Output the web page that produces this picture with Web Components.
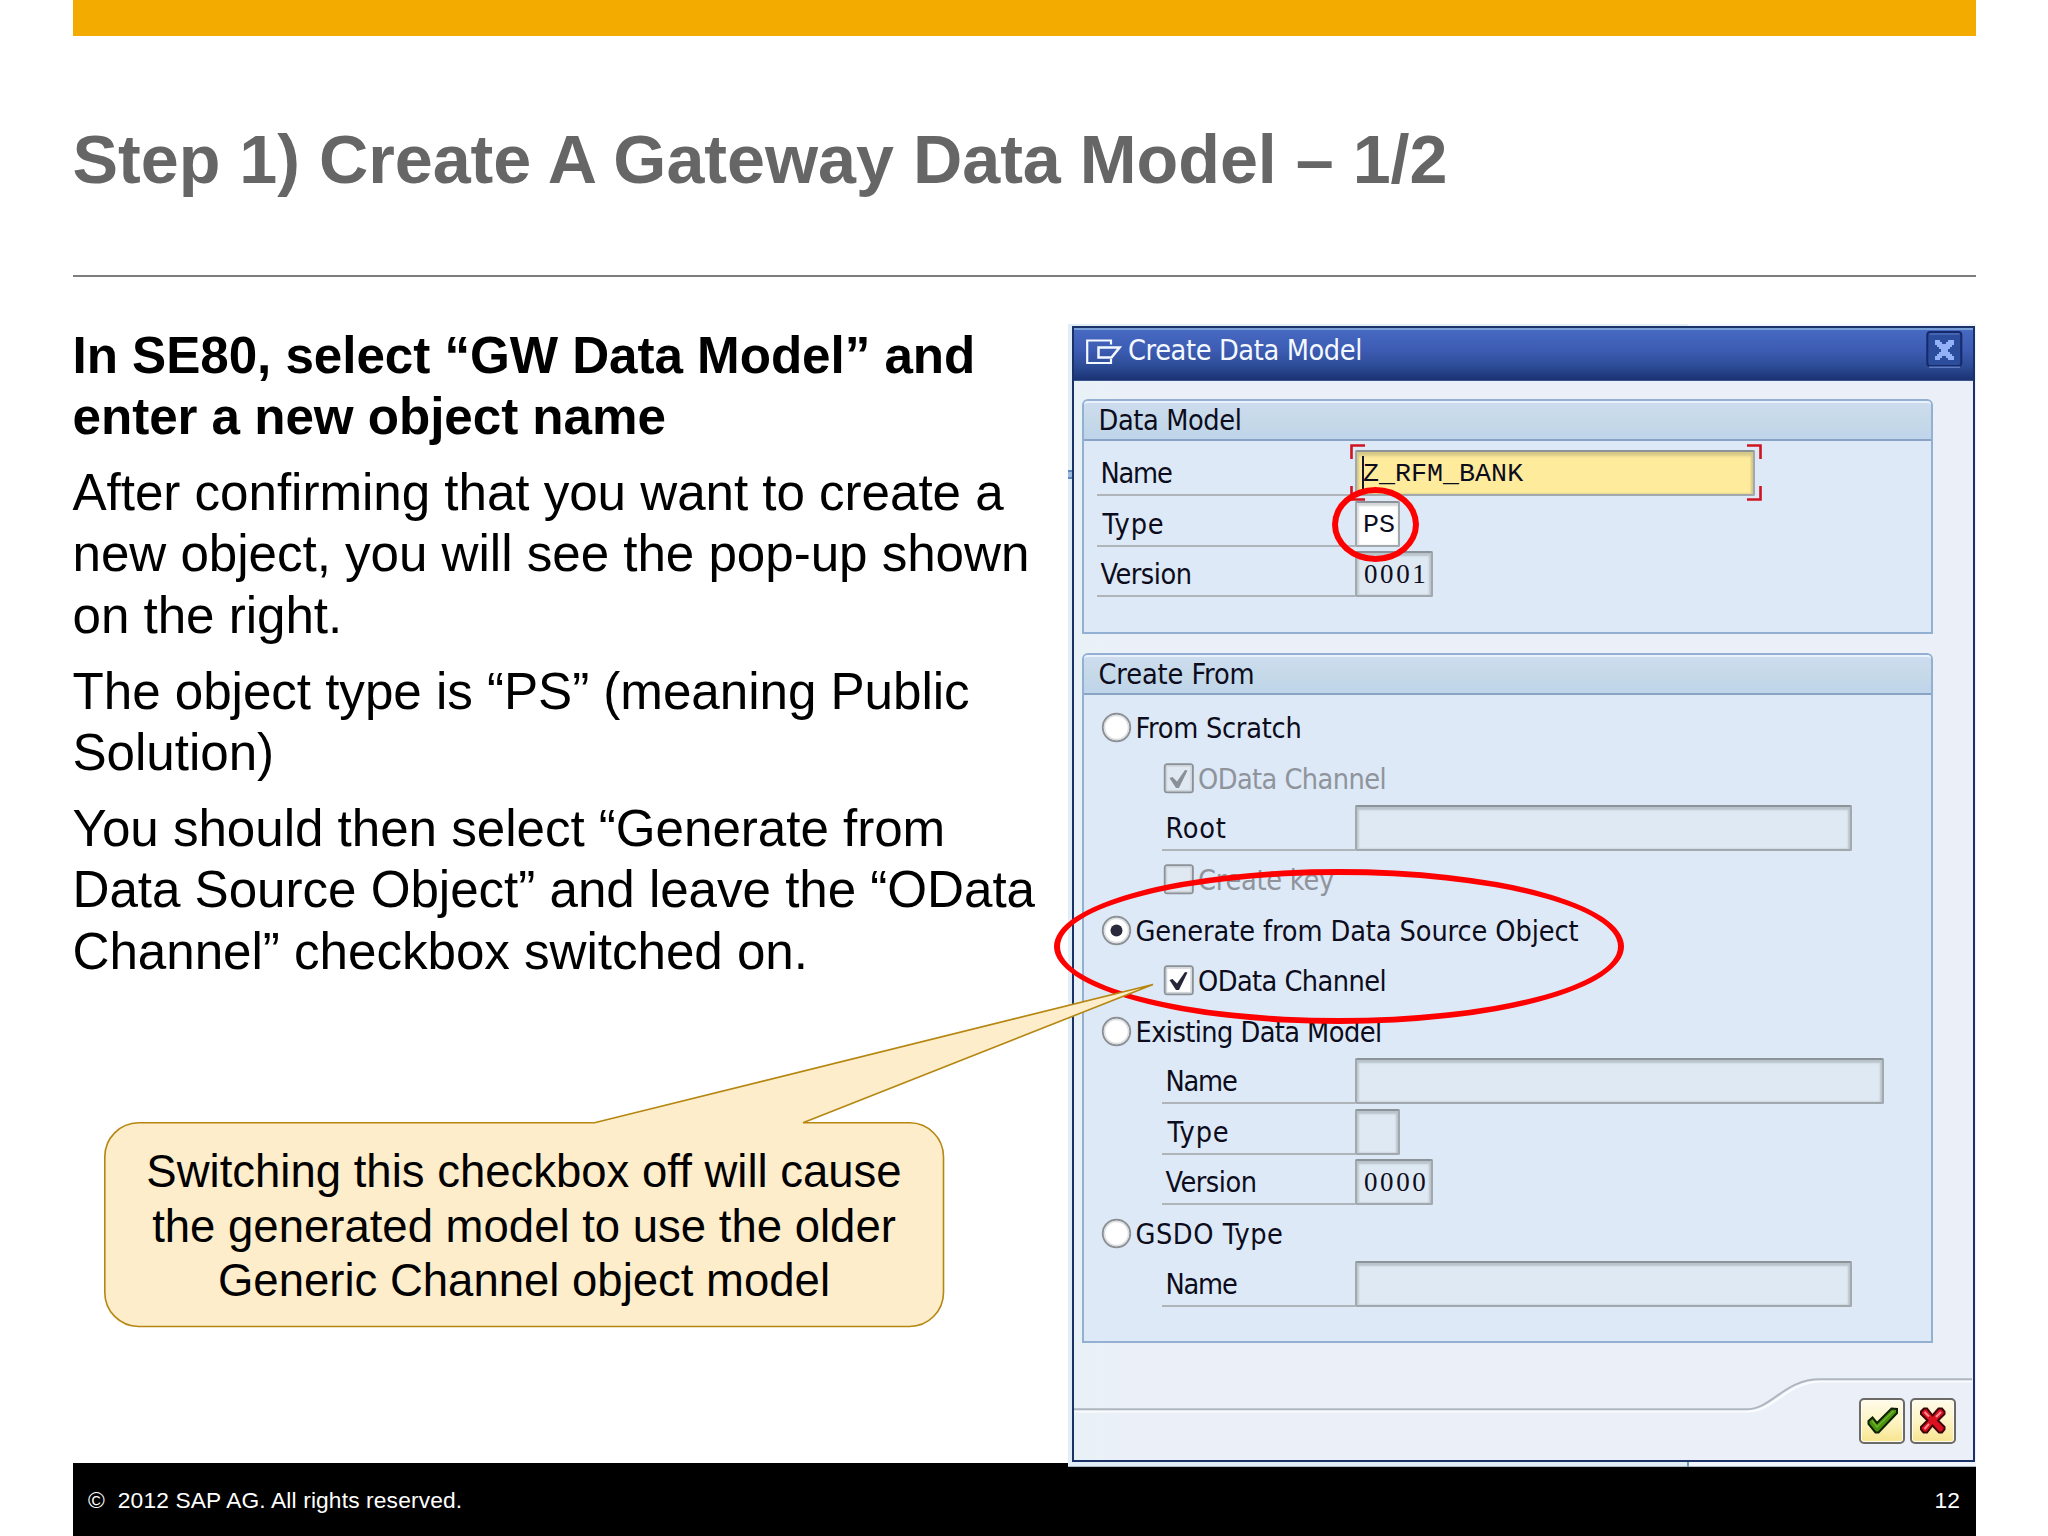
<!DOCTYPE html>
<html lang="en">
<head>
<meta charset="utf-8">
<title>Step 1) Create A Gateway Data Model</title>
<style>
  html, body {
    margin: 0;
    background: #fff;
  }

  body {
    width: 2048px;
    height: 1536px;
    overflow: hidden;
    font-family: "Liberation Sans", Arial, sans-serif;
  }
</style>
</head>
<body>

<training-slide>
  <fit-text slot="title" width="1375">Step 1) Create A Gateway Data Model – 1/2</fit-text>

  <slide-text slot="text">
    <p><b>In SE80, select “GW Data Model” and<br>enter a new object name</b></p>
    <p>After confirming that you want to create a<br>new object, you will see the pop-up shown<br>on the right.</p>
    <p>The object type is “PS” (meaning Public<br>Solution)</p>
    <p>You should then select “Generate from<br>Data Source Object” and leave the “OData<br>Channel” checkbox switched on.</p>
  </slide-text>

  <sap-dialog slot="figure">
    <fit-text slot="title" width="234">Create Data Model</fit-text>

    <sap-group style="height: 235px">
      <fit-text slot="title" width="143">Data Model</fit-text>
      <sap-field size="400" state="focus" text-width="71" value="Z_RFM_BANK">Name</sap-field>
      <sap-field size="45" state="open" text-width="62" inset="2" value="PS">Type</sap-field>
      <sap-field size="78" text-width="91" digits value="0001">Version</sap-field>
    </sap-group>

    <sap-group style="height: 690px">
      <fit-text slot="title" width="156">Create From</fit-text>
      <sap-option kind="radio" text-width="166">From Scratch</sap-option>
      <sap-option kind="check" nested checked disabled text-width="188">OData Channel</sap-option>
      <sap-field nested size="497" text-width="61">Root</sap-field>
      <sap-option kind="check" nested disabled text-width="136">Create key</sap-option>
      <sap-option kind="radio" checked text-width="443">Generate from Data Source Object</sap-option>
      <sap-option kind="check" nested checked text-width="188">OData Channel</sap-option>
      <sap-option kind="radio" text-width="246">Existing Data Model</sap-option>
      <sap-field nested size="529" text-width="71">Name</sap-field>
      <sap-field nested size="45" text-width="62" inset="2">Type</sap-field>
      <sap-field nested size="78" text-width="91" digits value="0000">Version</sap-field>
      <sap-option kind="radio" text-width="148">GSDO Type</sap-option>
      <sap-field nested size="497" text-width="71">Name</sap-field>
    </sap-group>
  </sap-dialog>

  <red-ring slot="overlay" style="left: 1332px; top: 487px; width: 87px; height: 75px"></red-ring>
  <red-ring slot="overlay" style="left: 1053.5px; top: 869px; width: 570px; height: 155px"></red-ring>

  <callout-note slot="overlay">Switching this checkbox off will cause<br>the generated model to use the older<br>Generic Channel object model</callout-note>

  <span slot="copyright">©&nbsp; 2012 SAP AG. All rights reserved.</span>
  <span slot="page">12</span>
</training-slide>

<script>
  /**
   * Inline text spread to a given width by adjusting its tracking.
   */
  class FitText extends HTMLElement {
    constructor() {
      super();
      this.attachShadow({ mode: 'open' });
      this.shadowRoot.innerHTML = `
        <style>
          :host {
            display: inline-block;
            white-space: nowrap;
            flex: none;
          }
        </style>
        <slot></slot>
      `;
    }

    connectedCallback() {
      requestAnimationFrame(() => this.fit());
      this.fit();
    }

    fit() {
      const target = Number(this.getAttribute('width'));
      if (!target) return;
      this.style.letterSpacing = '0px';
      const natural = this.getBoundingClientRect().width;
      if (!natural) return;
      this.style.letterSpacing = ((target - natural) / this.textContent.length) + 'px';
    }
  }

  /**
   * Slide frame: top band, title, two columns, footer.
   */
  class TrainingSlide extends HTMLElement {
    constructor() {
      super();
      this.attachShadow({ mode: 'open' });
      this.shadowRoot.innerHTML = `
        <style>
          :host {
            display: flex;
            flex-direction: column;
            position: relative;
            box-sizing: border-box;
            width: 2048px;
            height: 1536px;
            padding: 0 72.5px;
            background: #fff;
          }

          .band {
            height: 36.3px;
            background: #f3ab00;
          }

          header {
            display: flex;
            align-items: center;
            box-sizing: border-box;
            height: 240.7px;
            padding-top: 6px;
            border-bottom: 2px solid #7d7d7d;
            color: #666;
            font-size: 68.27px;
            font-weight: bold;
          }

          main {
            display: grid;
            grid-template-columns: 995px 908px;
            height: 1186.5px;
          }

          .text {
            padding-top: 47.9px;
          }

          .figure {
            padding-top: 47.5px;
          }

          footer {
            display: flex;
            justify-content: space-between;
            align-items: center;
            flex: 1;
            padding: 2px 15.5px 0;
            background: #000;
            color: #fff;
            font-size: 22.75px;
            letter-spacing: 0.14px;
          }
        </style>

        <div class="band"></div>
        <header><slot name="title"></slot></header>
        <main>
          <div class="text"><slot name="text"></slot></div>
          <div class="figure"><slot name="figure"></slot></div>
        </main>
        <footer>
          <slot name="copyright"></slot>
          <slot name="page"></slot>
        </footer>
        <slot name="overlay"></slot>
      `;
    }
  }

  class SlideText extends HTMLElement {
    constructor() {
      super();
      this.attachShadow({ mode: 'open' });
      this.shadowRoot.innerHTML = `
        <style>
          :host {
            display: flex;
            flex-direction: column;
            gap: 14.3px;
            color: #000;
            font-size: 51.2px;
            line-height: 61.44px;
            letter-spacing: -0.05px;
            white-space: nowrap;
          }

          ::slotted(p) {
            margin: 0;
          }
        </style>
        <slot></slot>
      `;
    }
  }

  /**
   * Modal window with title bar and confirm / cancel buttons.
   */
  class SapDialog extends HTMLElement {
    constructor() {
      super();
      this.attachShadow({ mode: 'open' });
      this.shadowRoot.innerHTML = `
        <style>
          :host {
            display: block;
            position: relative;
            z-index: 1;
            box-sizing: border-box;
            width: 908px;
            height: 1143px;
            padding: 1.5px 0.5px 5px 4.5px;
            background:
              linear-gradient(#5f86b8 0 0) 0 146px / 5px 2px no-repeat,
              linear-gradient(#9dbce0 0 0) 0 148px / 5px 5px no-repeat,
              linear-gradient(#5f86b8 0 0) 0 153px / 5px 2px no-repeat,
              linear-gradient(#7c9aae 0 0) 619px 1138px / 2px 5px no-repeat,
              linear-gradient(#aab9c4 0 0) 0 1142px / 100% 1px no-repeat,
              linear-gradient(90deg, #e2eef7 0 620px, #f3f5fd 620px);
            font-family: "DejaVu Sans Condensed", "DejaVu Sans", sans-serif;
            font-stretch: condensed;
            font-size: 28.6px;
            color: #0c0c1c;
          }

          .window {
            display: flex;
            flex-direction: column;
            box-sizing: border-box;
            height: 100%;
            border: 2.5px solid #1b3268;
            background: linear-gradient(90deg, #e8f2f6, #ebf0f8 5%, #ebf0f8);
          }

          .bar {
            display: flex;
            align-items: center;
            box-sizing: border-box;
            height: 53px;
            padding: 0 10px 5px 12px;
            border-top: 2px solid #7ba0d8;
            border-bottom: 1px solid #3c558f;
            background: linear-gradient(#4669c1, #3d5cb3 40%, #2d4c96 72%, #1a3273);
            color: #f4f8ff;
          }

          .bar svg {
            flex: none;
          }

          .close {
            margin-bottom: 6px;
          }

          .label {
            flex: 1;
            padding: 0 0 4px 6px;
          }

          .content {
            display: flex;
            flex-direction: column;
            gap: 18.7px;
            padding: 18px 40px 0 7.5px;
          }

          .actions {
            display: flex;
            flex: 1;
            position: relative;
            justify-content: flex-end;
            align-items: flex-end;
            gap: 4.5px;
            padding: 0 17.5px 16px 0;
          }

          .actions .edge {
            position: absolute;
            left: 0;
            top: 0;
          }

          button {
            display: grid;
            place-items: center;
            position: relative;
            box-sizing: border-box;
            width: 46px;
            height: 46px;
            padding: 0;
            border: 2.5px solid #6c6a66;
            border-radius: 5px;
            background: linear-gradient(#fffbea, #fdf3c0 55%, #f7e48e);
            box-shadow: inset 0 0 0 1px #fffdf2;
          }

          button svg {
            margin-bottom: 3px;
          }
        </style>

        <div class="window">
          <div class="bar">
            <svg width="36" height="28" viewBox="0 0 36 28" fill="none" stroke="#f4f8ff" stroke-width="2.2">
              <path d="M25 6.500V2.500H1.200V25H25V21"/>
              <path d="M12.500 9.500H33.500L25.500 19.500H12.500Z" stroke-width="2.500"/>
            </svg>
            <div class="label"><slot name="title"></slot></div>
            <svg class="close" width="37" height="38" viewBox="0 0 37 38">
              <rect x="1.300" y="2" width="34" height="34" rx="3" fill="#2c4d9c" stroke="#15296b" stroke-width="2"/>
              <path d="M3 37.200H34" stroke="#5f7fc6" stroke-width="1.500"/>
              <path d="M3.500 4H33.500" stroke="#4d6dbd" stroke-width="1.500"/>
              <path d="M9 10h5v2h2v2h4v-2h2v-2h6v5h-2v2h-2v2h-2v3h2v2h2v2h2v4h-6v-2h-2v-2h-4v2h-2v2h-5v-4h2v-2h2v-2h2v-3h-2v-2h-2v-2h-2z" fill="#93b1f6"/>
            </svg>
          </div>

          <div class="content"><slot></slot></div>

          <div class="actions">
            <svg class="edge" width="898" height="118" viewBox="0 0 898 118" fill="none">
              <path d="M0 68.500H674C700 68.500 712 38.500 748 38.500H898" stroke="#fafcff" stroke-width="2"/>
              <path d="M0 66.300H672C698 66.300 710 36.300 746 36.300H898" stroke="#afb6bf" stroke-width="2"/>
            </svg>
            <button title="Continue">
              <svg width="36" height="34" viewBox="0 0 36 34" stroke-linejoin="miter">
                <path d="M4.500 18L8.500 14.500L13 20L27.500 5.500L33 6V10L14.500 29.500H11.500L4.500 21Z" fill="#4a9210" stroke="#0d1f04" stroke-width="2"/>
                <path d="M8 17.500L13 24L29.500 8" fill="none" stroke="#6fb524" stroke-width="1.500"/>
              </svg>
            </button>
            <button title="Cancel">
              <svg width="34" height="34" viewBox="0 0 34 34">
                <path d="M8 5.500H11L16.500 12.500L22.500 5.500H26L28.500 8.500V11L22 17.500L28.500 24V26.500L26 29.500H23L16.500 22.500L11 29.500H7.500L5 26.500V24L11.500 17.500L5 11V8.500Z" fill="#dd1020" stroke="#3c0508" stroke-width="2"/>
                <path d="M8.500 9L13 13.500M25 9L20 14M8.500 26L13 21" stroke="#ff8d90" stroke-width="2"/>
              </svg>
            </button>
          </div>
        </div>
      `;
    }
  }

  class SapGroup extends HTMLElement {
    constructor() {
      super();
      this.attachShadow({ mode: 'open' });
      this.shadowRoot.innerHTML = `
        <style>
          :host {
            display: flex;
            flex-direction: column;
            box-sizing: border-box;
            border: 2px solid #93afd2;
            border-radius: 6px 6px 0 0;
            background: #dde9f6;
            flex: none;
          }

          .head {
            display: flex;
            align-items: center;
            box-sizing: border-box;
            height: 40px;
            padding: 0 0 2px 15px;
            border-top: 2px solid #e9f2fc;
            border-bottom: 2px solid #88a3c4;
            border-radius: 4px 4px 0 0;
            background: linear-gradient(#cddcef, #c5d9e8 50%, #bfd4ea);
          }

          .rows {
            padding-top: 8px;
          }
        </style>
        <div class="head"><slot name="title"></slot></div>
        <div class="rows"><slot></slot></div>
      `;
    }
  }

  /**
   * Label with underline and input box.
   */
  class SapField extends HTMLElement {
    constructor() {
      super();
      this.attachShadow({ mode: 'open' });
    }

    connectedCallback() {
      const inset = Number(this.getAttribute('inset') || 0);
      const value = this.getAttribute('value') || '';
      const focused = this.getAttribute('state') === 'focus';

      this.shadowRoot.innerHTML = `
        <style>
          :host {
            display: flex;
            align-items: flex-start;
            box-sizing: border-box;
            height: 50.65px;
            padding: 1px 0 0 13px;
          }

          :host([nested]) {
            padding-left: 78px;
          }

          .label {
            display: flex;
            align-items: center;
            box-sizing: border-box;
            width: 258.5px;
            height: 46px;
            padding: 2px 0 0 ${4 + inset}px;
            border-bottom: 2px solid #aeb4b9;
          }

          :host([nested]) .label {
            width: 193.5px;
          }

          .box {
            display: flex;
            align-items: center;
            position: relative;
            box-sizing: border-box;
            width: ${this.getAttribute('size')}px;
            height: 46px;
            padding: 2px 0 0 6px;
            border: 2px solid #a1a8ae;
            border-top-color: #8b9298;
            border-radius: 2px;
            background: #dfe9f3;
            box-shadow: inset 0 3px 2px #b9c3cb, inset 2px 0 2px #c3ccd4, inset -2px 0 2px #bcc5cd;
            font-family: "Liberation Mono", monospace;
            font-size: 26.7px;
            white-space: nowrap;
          }

          :host([digits]) .box {
            padding-top: 0;
            padding-left: 7px;
            font-family: "Liberation Serif", serif;
            font-size: 27px;
            letter-spacing: 2.6px;
          }

          :host([state="open"]) .box {
            background: #fff;
            box-shadow: inset 0 3px 2px #d5d7da, inset 2px 0 2px #dcdee0;
          }

          :host([state="focus"]) .box {
            background: #feeb9c;
            box-shadow: inset 0 4px 3px #d6c987, inset -2px 0 2px #d6c987, inset 2px 0 2px #d6c987;
          }

          .caret {
            position: absolute;
            left: 5px;
            top: 4px;
            width: 2px;
            height: 34px;
            background: #14142c;
          }

          .marks {
            position: absolute;
            left: -7.5px;
            top: -7.5px;
          }
        </style>
        <div class="label"><fit-text width="${this.getAttribute('text-width')}">${this.textContent}</fit-text></div>
        <div class="box">${value ? `<span>${value}</span>` : ''}${focused ? `<i class="caret"></i>
          <svg class="marks" width="412" height="57" viewBox="0 0 412 57" fill="none" stroke="#cf1420" stroke-width="2.6">
            <path d="M1.500 15V1.500H15M397 1.500H410.500V15M410.500 42V55.500H397M15 55.500H1.500V42"/>
          </svg>` : ''}</div>
      `;
    }
  }

  /**
   * Radio button or checkbox row.
   */
  class SapOption extends HTMLElement {
    constructor() {
      super();
      this.attachShadow({ mode: 'open' });
    }

    connectedCallback() {
      this.shadowRoot.innerHTML = `
        <style>
          :host {
            display: flex;
            align-items: center;
            box-sizing: border-box;
            height: 50.65px;
            padding-left: 17px;
            gap: 4px;
          }

          :host([nested]) {
            padding-left: 79.500px;
          }

          :host([disabled]) {
            color: #8f949c;
          }

          svg {
            display: block;
            flex: none;
            margin-bottom: 1px;
          }
        </style>
        ${this.glyph()}
        <fit-text width="${this.getAttribute('text-width')}">${this.textContent}</fit-text>
      `;
    }

    glyph() {
      const checked = this.hasAttribute('checked');
      const disabled = this.hasAttribute('disabled');

      if (this.getAttribute('kind') === 'radio') {
        return `
          <svg width="31" height="31" viewBox="0 0 31 31">
            <circle cx="15.500" cy="15.500" r="13.700" fill="#fff" stroke="#8c9094" stroke-width="2"/>
            <circle cx="15.500" cy="15.500" r="12" fill="none" stroke="#dcdfe2" stroke-width="1.500"/>
            ${checked ? '<circle cx="15.500" cy="15.500" r="6" fill="#2a2a3c"/>' : ''}
          </svg>`;
      }

      return `
        <svg width="31" height="31" viewBox="0 0 31 31">
          <rect x="1.800" y="1.300" width="28" height="28" rx="2.500" fill="${disabled ? '#e0e9f2' : '#fff'}" stroke="#8b9197" stroke-width="2"/>
          <rect x="3.500" y="3" width="24.600" height="24.600" fill="none" stroke="#cfd5da" stroke-width="1.500"/>
          ${checked ? `<path d="M6.500 15L9.500 14L14 18.500L22 7L24.500 7.500L16 25H13Z" fill="${disabled ? '#8b9098' : '#26263a'}"/>` : ''}
        </svg>`;
    }
  }

  class RedRing extends HTMLElement {
    constructor() {
      super();
      this.attachShadow({ mode: 'open' });
      this.shadowRoot.innerHTML = `
        <style>
          :host {
            display: block;
            position: absolute;
            z-index: 2;
            box-sizing: border-box;
            border: 6px solid #fe0000;
            border-radius: 50%;
          }
        </style>
      `;
    }
  }

  /**
   * Speech bubble whose tail points at the checkbox in the dialog.
   */
  class CalloutNote extends HTMLElement {
    constructor() {
      super();
      this.attachShadow({ mode: 'open' });
      this.shadowRoot.innerHTML = `
        <style>
          :host {
            display: block;
            position: absolute;
            z-index: 3;
            left: 104px;
            top: 983px;
            width: 1052px;
            height: 345px;
          }

          svg {
            position: absolute;
            left: 0;
            top: 0;
          }

          .text {
            position: relative;
            width: 840px;
            padding-top: 162px;
            color: #000;
            font-size: 45.5px;
            line-height: 54.6px;
            text-align: center;
            white-space: nowrap;
          }
        </style>
        <svg width="1052" height="345" viewBox="0 0 1052 345">
          <path d="M34.500 139.800H490.500L1049 1.500L699 139.800H805.500A34 34 0 0 1 839.500 173.800V309.500A34 34 0 0 1 805.500 343.500H34.500A34 34 0 0 1 .800 309.500V173.800A34 34 0 0 1 34.500 139.800Z" fill="#feedcb" stroke="#b58610" stroke-width="1.600"/>
        </svg>
        <div class="text"><slot></slot></div>
      `;
    }
  }

  // Register custom elements
  customElements.define('fit-text', FitText);
  customElements.define('training-slide', TrainingSlide);
  customElements.define('slide-text', SlideText);
  customElements.define('sap-dialog', SapDialog);
  customElements.define('sap-group', SapGroup);
  customElements.define('sap-field', SapField);
  customElements.define('sap-option', SapOption);
  customElements.define('red-ring', RedRing);
  customElements.define('callout-note', CalloutNote);
</script>
</body>
</html>
